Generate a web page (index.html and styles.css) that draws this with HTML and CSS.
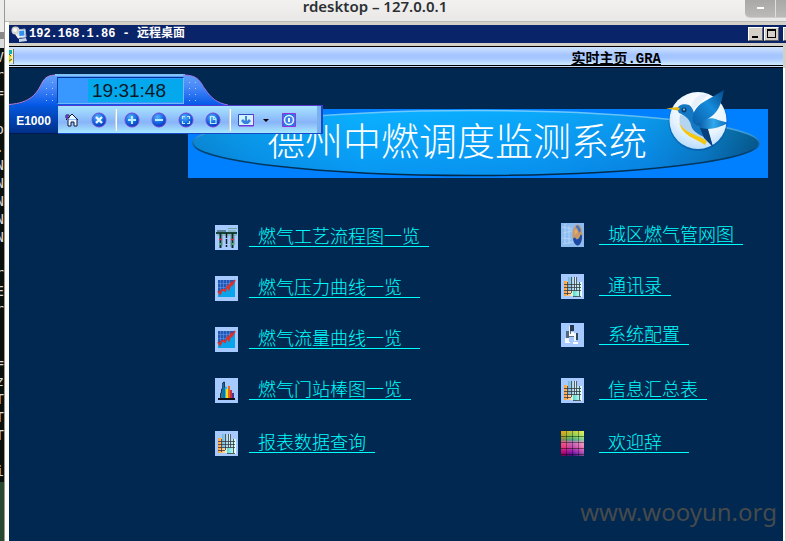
FILE: index.html
```
<!DOCTYPE html>
<html lang="zh-CN">
<head>
<meta charset="utf-8">
<title>rdesktop – 127.0.0.1</title>
<link rel="stylesheet" href="styles.css">
</head>
<body>
<svg class="defs" aria-hidden="true">
  <defs>
    <radialGradient id="ball" cx=".4" cy=".3" r=".75"><stop offset="0" stop-color="#5cb4ff"/><stop offset=".55" stop-color="#1468e0"/><stop offset="1" stop-color="#0830b0"/></radialGradient>
    <linearGradient id="orange"><stop offset="0" stop-color="#ffa030"/><stop offset="1" stop-color="#f8ecd8"/></linearGradient>
    <linearGradient id="mint"><stop offset="0" stop-color="#48e0d0"/><stop offset="1" stop-color="#f4ffff"/></linearGradient>
    <linearGradient id="sky"><stop offset="0" stop-color="#68b8e0"/><stop offset="1" stop-color="#f0f8ff"/></linearGradient>
    <symbol id="sheet" viewBox="0 0 23 25">
      <rect width="23" height="25" fill="#a6caff"/>
      <path d="M3 7h9v15H3z" fill="url(#orange)"/><path d="M12 8h9v15h-9z" fill="url(#mint)"/><path d="M7 3h9v14H7z" fill="url(#sky)"/>
      <path d="M3 10.500h17M3 13.500h17M3 16.500h17M3 19.500h7M12 22.500h8M10.500 3v16M13.500 3v14M15.500 3v14M6.500 8v13M18.500 8v14" stroke="#383840" stroke-width=".8" fill="none"/>
    </symbol>
    <symbol id="trend" viewBox="0 0 23 25">
      <rect width="23" height="25" fill="#a6caff"/><rect x="3" y="4" width="17" height="17" fill="#2058b8"/>
      <path d="M5.500 4v10M8.500 4v10M11.500 4v8M14.500 4v7M3 7.500h12M3 11.500h9" stroke="#6f9ce0" stroke-width=".5"/>
      <path d="M3 17l4-2 4-3 4-1 5-6v16H3z" fill="#08a4ec"/>
      <path d="M3 15l2 3 2-4 2 0 1 1 3-5 1 3 2-6 1 2 3-5" fill="none" stroke="#e03028" stroke-width="1.800"/>
    </symbol>
  </defs>
</svg>

<div class="screen">
  <aside class="terminal">
<pre class="terminal-text">V
r
=

o
.
N
N
N
N
N

r
E
r


=
z
T
T
T

i</pre>
  </aside>

  <div class="rdesktop">
    <header class="host-bar">
      <h1 class="host-title">rdesktop – 127.0.0.1</h1>
      <div class="host-controls">
        <button class="host-btn" aria-label="Minimize"><span class="dash"></span></button>
        <button class="host-btn host-btn-cut" aria-label="Maximize"></button>
      </div>
    </header>

    <div class="session">
      <div class="title-bar">
        <svg class="pc-icon" viewBox="0 0 17 17" aria-hidden="true">
          <path d="M6 4l8-1 1 8-8 1z" fill="#e4edf8" stroke="#a8b8cc"/><path d="M8 5l5-.500.500 5-5 .500z" fill="#2c90ec"/>
          <path d="M8 13l7-1 1 3-8 1z" fill="#c8d8ec"/><circle cx="4.500" cy="4.500" r="4" fill="#d4d4d0"/><circle cx="4" cy="4" r="2" fill="#f8f8f4"/><path d="M5 8l3 4" stroke="#f4f4f0" stroke-width="2"/>
        </svg>
        <h2 class="title-text">192.168.1.86 - 远程桌面</h2>
        <div class="win-controls">
          <button class="win-btn" aria-label="最小化"><span class="min-mark"></span></button>
          <button class="win-btn" aria-label="最大化"><span class="max-mark"></span></button>
          <button class="win-btn win-btn-cut" aria-label="关闭"></button>
        </div>
      </div>

      <div class="page-bar">
        <svg class="page-icon" viewBox="0 0 5 15" aria-hidden="true"><path d="M0 0h4v14H0z" fill="#f4ecc8"/><path d="M0 1h3v4H0z" fill="#08b0b8"/><path d="M0 5l3 2-2 2 2 2-3 3z" fill="#f0d000"/><path d="M0 5l2 2M0 12l3-2" stroke="#207830"/><path d="M4.500 0v15" stroke="#787868"/></svg>
        <span class="page-name">实时主页.GRA</span>
      </div>

      <main class="canvas">
        <section class="banner">
          <svg class="banner-oval" viewBox="0 0 580 70" preserveAspectRatio="none" aria-hidden="true">
            <defs>
              <linearGradient id="oval"><stop offset="0" stop-color="#087cc0"/><stop offset=".1" stop-color="#0894e4"/><stop offset=".3" stop-color="#08acff"/><stop offset=".6" stop-color="#08a0f8"/><stop offset=".8" stop-color="#0888e0"/><stop offset=".9" stop-color="#0868a8"/><stop offset="1" stop-color="#022c48"/></linearGradient>
              <linearGradient id="shade" x1="0" y1="0" x2="0" y2="1"><stop offset="0" stop-color="#10b8ff" stop-opacity=".4"/><stop offset="1" stop-color="#0878e0" stop-opacity=".4"/></linearGradient>
              <linearGradient id="rim" x1="0" y1="0" x2="0" y2="1"><stop offset="0" stop-color="#70ccff"/><stop offset=".4" stop-color="#3090d0"/><stop offset=".6" stop-color="#044878"/><stop offset="1" stop-color="#002848"/></linearGradient>
            </defs>
            <ellipse cx="288" cy="34.500" rx="283" ry="33" fill="url(#oval)"/>
            <ellipse cx="288" cy="34.500" rx="283" ry="33" fill="url(#shade)" stroke="url(#rim)" stroke-width="1.500"/>
          </svg>
          <h3 class="banner-title">德州中燃调度监测系统</h3>
          <svg class="bird" viewBox="0 0 68 66" aria-hidden="true">
            <defs>
              <radialGradient id="disc" cx=".55" cy=".25" r=".85"><stop offset="0" stop-color="#fff"/><stop offset=".6" stop-color="#e8f4ff"/><stop offset="1" stop-color="#a8d4fc"/></radialGradient>
              <linearGradient id="wing" x1="1" y1="0" x2="0" y2="1"><stop offset="0" stop-color="#064888"/><stop offset=".45" stop-color="#168cdc"/><stop offset="1" stop-color="#085ca8"/></linearGradient>
              <linearGradient id="tail"><stop offset="0" stop-color="#0858a4"/><stop offset=".5" stop-color="#30a8ec"/><stop offset="1" stop-color="#0868b8"/></linearGradient>
            </defs>
            <circle cx="34" cy="33.500" r="29.500" fill="#04509c" opacity=".45"/>
            <circle cx="34" cy="32.500" r="28.500" fill="url(#disc)"/>
            <path d="M27 18C30 9 37 5 45 6L29 22z" fill="#d8e8f8" opacity=".6"/>
            <path d="M16 27C14 36 18 42 24 46L43 55 33 38 24 28z" fill="#b4d4f0"/>
            <path d="M13 21C14 17 20 15 25 17 30 20 29 26 33 29L42 36 49 59 42 50C34 46 28 43 27 37 26 31 20 27 15 25z" fill="#1478c4"/>
            <path d="M15 34C19 45 35 47 43 53L41 57C34 51 18 49 15 34z" fill="#f4c810"/>
            <path d="M29 34C27 23 35 16 43 12L60 2C58 12 56 22 48 28L33 38z" fill="url(#wing)"/>
            <path d="M34 36C41 30 48 29 54 32L65 35C58 38 50 41 44 41L39 46z" fill="url(#tail)"/>
            <path d="M36 40L44 41 49 59 40 50z" fill="#06407c"/>
            <path d="M2 20.500L14 19 16 21 14 22.500z" fill="#e8b410"/><circle cx="20" cy="22" r="2.500" fill="#0c4070"/><circle cx="20" cy="21.500" r="1" fill="#90d0f8"/>
          </svg>
        </section>

        <nav class="menu">
          <ul class="menu-col">
            <li class="item gap-26">
              <svg class="icon" viewBox="0 0 23 25" aria-hidden="true"><rect width="23" height="25" fill="#a6caff"/><path d="M1 8h21" stroke="#184438" stroke-width="2"/><path d="M2 6h9" stroke="#184438"/><path d="M13 3.500h9M2 10h20M13 6h8" stroke="#70a898"/><path d="M5.500 8v15M17.500 8v15" stroke="#0c3028" stroke-width="2"/><path d="M11.500 8v14" stroke="#101c20" stroke-width="1.500" stroke-dasharray="5 1"/><path d="M7.500 10v11M15.500 10v12M19.500 10v10" stroke="#78a8a0" stroke-width=".8"/><path d="M4 14.500h3M16 14.500h3" stroke="#e03040" stroke-width="1.500"/><path d="M4 19h2M17 19h2" stroke="#48b060" stroke-width="2"/></svg>
              <a class="link" href="#process">燃气工艺流程图一览</a>
            </li>
            <li class="item gap-26">
              <svg class="icon" aria-hidden="true"><use href="#trend"/></svg>
              <a class="link trail-18" href="#pressure">燃气压力曲线一览</a>
            </li>
            <li class="item gap-26">
              <svg class="icon" aria-hidden="true"><use href="#trend"/></svg>
              <a class="link trail-18" href="#flow">燃气流量曲线一览</a>
            </li>
            <li class="item gap-28">
              <svg class="icon" viewBox="0 0 23 25" aria-hidden="true"><rect width="23" height="25" fill="#a6caff"/><path d="M3 20h17v2H3z" fill="#101018"/><path d="M5 16h2v4H5z" fill="#704828"/><path d="M6 11h2v9H6z" fill="#207888"/><path d="M8 4h2v16H8z" fill="#0870b8"/><path d="M10 9h2v11h-2z" fill="#38b8d8"/><path d="M11 11h2v9h-2z" fill="#f8e010"/><path d="M13 8h2v12h-2z" fill="#e86818"/><path d="M15 12h2v8h-2z" fill="#c03848"/><path d="M17 15h2v5h-2z" fill="#583088"/><path d="M5.500 20v-5h1v-4h1V5h1V4h1v5h1" stroke="#202840" fill="none" stroke-width=".8"/></svg>
              <a class="link" href="#stations">燃气门站棒图一览</a>
            </li>
            <li class="item">
              <svg class="icon" aria-hidden="true"><use href="#sheet"/></svg>
              <a class="link" href="#reports">报表数据查询</a>
            </li>
          </ul>
          <ul class="menu-col menu-col-right">
            <li class="item gap-26">
              <svg class="icon" viewBox="0 0 23 25" aria-hidden="true"><rect width="23" height="24" fill="#8cbcf0"/><path d="M1 4l10 2M2 10l9-2M1 15l9 1M2 21l10-2M4 1v20M8 3v18" stroke="#b4d4f8"/><ellipse cx="16.500" cy="12" rx="5" ry="10.500" fill="#c89868"/><path d="M12 16c3-4 2 2 5 0s2-7 4-3c0 6-2 9-4 9.500s-4-2-5-6.500z" fill="#1848a8"/><path d="M15 3c2-2 4 1 5 5l-2 2c0-3-3-2-3-7z" fill="#4878c0"/><path d="M13 8l3-3 1 4-3 3z" fill="#e8a860"/></svg>
              <a class="link" href="#network">城区燃气管网图</a>
            </li>
            <li class="item gap-24">
              <svg class="icon" aria-hidden="true"><use href="#sheet"/></svg>
              <a class="link" href="#contacts">通讯录</a>
            </li>
            <li class="item gap-30">
              <svg class="icon" viewBox="0 0 23 25" aria-hidden="true"><rect width="23" height="24" fill="#a6caff"/><path d="M9 2h4v6H9z" fill="#283848"/><path d="M8 3h1v6h4v1H8z" fill="#e8f0f8"/><path d="M5 8h3v7H5z" fill="#506880"/><path d="M8 10h6v4H8z" fill="#fff"/><path d="M15 10h2v7h-2z" fill="#30485c"/><path d="M13 10h2v8h-2zM4 15h4v4H4z" fill="#f0f6fc"/><path d="M12 19h5v2h-5zM4 19h5v1H4z" fill="#fff"/><path d="M9.500 8v3M8 13.500h5" stroke="#405060" stroke-width=".8"/></svg>
              <a class="link" href="#settings">系统配置</a>
            </li>
            <li class="item gap-28">
              <svg class="icon" aria-hidden="true"><use href="#sheet"/></svg>
              <a class="link" href="#summary">信息汇总表</a>
            </li>
            <li class="item">
              <span class="icon palette"></span>
              <a class="link trail-27" href="#welcome">欢迎辞</a>
            </li>
          </ul>
        </nav>

        <div class="dock">
          <div class="dock-top">
            <svg class="dock-shape" viewBox="0 0 219 32" aria-hidden="true">
              <defs><linearGradient id="cap" x1="0" y1="0" x2="0" y2="1"><stop offset="0" stop-color="#60a0f8"/><stop offset=".4" stop-color="#4888f8"/><stop offset="1" stop-color="#0458e8"/></linearGradient></defs>
              <path d="M0 32C22 31 28 20 33 10 36 4 40 2 48 2H174C190 2 191 9 196 16 202 25 208 30 219 32z" fill="url(#cap)"/>
              <path d="M0 31.500C22 30 28 20 33 10 36 4 40 2 48 2" fill="none" stroke="#c080e8"/>
              <path d="M46 2H176" stroke="#80c4f8" stroke-width="2"/>
              <path d="M174 2C190 2 191 9 196 16 202 25 208 30 219 32" fill="none" stroke="#a070f0"/>
              <path d="M43.500 9v22M37.500 15v16M180.500 9v22M186.500 9v22" stroke="#a8ccff" stroke-dasharray="1 5"/>
            </svg>
            <div class="clock"><time class="clock-face">19:31:48</time></div>
          </div>
          <div class="dock-row">
            <div class="model">E1000</div>
            <div class="tools">
              <button class="tool" aria-label="主页"><svg viewBox="0 0 16 16"><path d="M2 8l6-6 6 6M4 7v7h3v-4h3v4h3V7M2 3h3v3H2z" fill="#e8f4ff" stroke="#101838"/><path d="M2 3h2v4H2z" fill="#6038c0"/></svg></button>
              <button class="tool" aria-label="关闭页面"><svg viewBox="0 0 16 16"><circle cx="8" cy="8" r="7" fill="url(#ball)" stroke="#7050d8"/><path d="M5 5l6 6M11 5l-6 6" stroke="#e8f8ff" stroke-width="2.400"/></svg></button>
              <span class="sep"></span>
              <button class="tool" aria-label="放大"><svg viewBox="0 0 16 16"><circle cx="8" cy="8" r="7" fill="url(#ball)" stroke="#7048d8"/><path d="M4 8h8M8 4v8" stroke="#b8ecff" stroke-width="2"/></svg></button>
              <button class="tool" aria-label="缩小"><svg viewBox="0 0 16 16"><circle cx="8" cy="8" r="7" fill="url(#ball)" stroke="#7048d8"/><path d="M4 8h8" stroke="#b8ecff" stroke-width="2"/></svg></button>
              <button class="tool" aria-label="全屏"><svg viewBox="0 0 16 16"><circle cx="8" cy="8" r="7" fill="url(#ball)" stroke="#7048d8"/><path d="M4.500 7V4.500H7M9 4.500h2.500V7M11.500 9v2.500H9M7 11.500H4.500V9" fill="none" stroke="#b8ecff" stroke-width="1.200"/></svg></button>
              <button class="tool" aria-label="页面"><svg viewBox="0 0 16 16"><circle cx="8" cy="8" r="7" fill="url(#ball)" stroke="#7048d8"/><path d="M5.500 4.500H9l2 2.500v4.500H5.500zM8.500 4.500v3H11" fill="none" stroke="#b8ecff" stroke-width="1.200"/></svg></button>
              <span class="sep"></span>
              <button class="tool" aria-label="显示"><svg viewBox="0 0 16 16"><path d="M.500 2.500h15v11H.500z" fill="#d0f4ff" stroke="#3048c8"/><path d="M15.500 2v12H1" fill="none" stroke="#9030d8"/><path d="M8 4v5" stroke="#1860d0" stroke-width="1.500"/><path d="M3 9l2-2 2 2h2l2-2 2 2-3 3H6z" fill="#3880e0"/></svg></button>
              <button class="tool drop" aria-label="更多"><svg viewBox="0 0 8 16"><path d="M1 7h6L4 10z" fill="#000"/></svg></button>
              <button class="tool" aria-label="退出"><svg viewBox="0 0 16 16"><path d="M1.500 1.500h13v13h-13z" fill="#2878e8" stroke="#9830d8"/><circle cx="8" cy="8" r="4.500" fill="#4080e8" stroke="#d8f4ff" stroke-width="1.600"/><path d="M8 6v4" stroke="#e8f8ff" stroke-width="2"/></svg></button>
            </div>
          </div>
        </div>

        <div class="watermark">www.wooyun.org</div>
      </main>
    </div>
  </div>
</div>
</body>
</html>
```
FILE: styles.css
```
* { box-sizing: border-box; }

body {
  margin: 0;
  background: #fff;
  font-family: "Liberation Sans", "Noto Sans CJK SC", sans-serif;
  overflow: hidden;
}

h1, h2, h3, ul, pre { margin: 0; padding: 0; }
button { padding: 0; border: 0; background: none; }
.defs { position: absolute; width: 0; height: 0; }

.screen { display: flex; min-height: 100vh; }

/* sliver of the terminal behind the window */
.terminal {
  flex: none;
  width: 5px;
  padding-top: 48px;
  overflow: hidden;
  border-right: 1px solid #9c9894;
  background: linear-gradient(#ececea 0 32px, #888 32px 39px, #ddd 39px 48px, #0a100c 48px 482px, #284830 482px);
}
.terminal-text {
  display: flex;
  justify-content: flex-end;
  color: #d8d8d8;
  font: 14px/18px "DejaVu Sans Mono", monospace;
}

.rdesktop { flex: 1; min-width: 0; display: flex; flex-direction: column; }

.host-bar {
  display: flex;
  align-items: flex-start;
  height: 22px;
  background: linear-gradient(#f2f1f0, #e9e8e6);
  border-bottom: 1px solid #bcbab6;
}
.host-title {
  flex: 1;
  text-align: center;
  font: 600 15px/12px "Noto Sans", "Open Sans", sans-serif;
  color: #2c3034;
}
.host-controls {
  display: flex;
  border-bottom-left-radius: 5px;
  background: linear-gradient(#a8a8a6, #bcbab8);
  border-bottom: 1px solid #d0cecc;
}
.host-btn { width: 31px; height: 17px; display: grid; place-items: center; border-right: 1px solid #e0dedc; }
.host-btn-cut { width: 10px; border-right: 0; }
.dash { width: 7px; height: 2px; background: #fff; margin-bottom: 2px; }

.session {
  flex: 1;
  display: flex;
  flex-direction: column;
  border-left: 4px solid #d4d0c8;
  border-image: linear-gradient(to right, #fff 50%, #d4ccc8 50%) 0 0 0 4;
  background: #d4d0c8;
  padding-top: 3px;
}

.title-bar {
  display: flex;
  align-items: center;
  height: 18px;
  padding-left: 2px;
  background: #0a246a;
  color: #fff;
}
.pc-icon { width: 17px; height: 17px; }
.title-text {
  flex: 1;
  padding-left: 1px;
  font: bold 12px/18px "Liberation Mono", "Noto Sans CJK SC", monospace;
}
.win-controls { display: flex; gap: 1px; }
.win-btn {
  width: 15px;
  height: 14px;
  background: #d4d0c8;
  border: 1px solid;
  border-color: #fff #606060 #606060 #fff;
  display: flex;
  align-items: flex-end;
  padding: 2px;
}
.win-btn-cut { width: 3px; margin-left: 3px; padding: 0; border-right: 0; }
.min-mark { width: 6px; height: 2px; margin-left: 1px; background: #000; }
.max-mark { width: 9px; height: 9px; border: 1px solid #000; border-top-width: 2px; }

.page-bar {
  display: flex;
  align-items: center;
  height: 22px;
  margin: 3px 3px 0 0;
  border-top: 1px solid #000;
  border-bottom: 3px double #000;
  background: linear-gradient(#d0e4ff, #a4c4ff 45%, #a8c8ff 65%, #d0ecff);
}
.page-icon { width: 5px; height: 15px; }
.page-name {
  margin-left: auto;
  padding: 6px 122px 0 0;
  font: bold 14px/18px "Liberation Mono", "Noto Sans CJK SC", monospace;
  text-decoration: underline;
}

.canvas {
  flex: 1;
  position: relative;
  display: flex;
  flex-direction: column;
  margin-right: 3px;
  padding-top: 41px;
  background: #002850;
  box-shadow: 2px 0 #fff;
}

.banner {
  position: relative;
  display: flex;
  align-items: flex-start;
  height: 69px;
  margin: 0 15px 0 179px;
  background: #0080ff;
}
.banner-oval { position: absolute; inset: 0; width: 100%; height: 100%; }
.banner-title {
  position: relative;
  padding-left: 79px;
  font: 300 38px/60px "Noto Sans CJK SC", sans-serif;
  color: #fff;
  white-space: nowrap;
}
.bird { position: absolute; right: 36px; top: -21px; width: 68px; height: 66px; }

.menu {
  display: flex;
  justify-content: space-between;
  padding: 47px 40px 0 206px;
}
.menu-col { list-style: none; }
.menu-col-right { margin-top: -2px; }
.item { display: flex; align-items: flex-start; height: 25px; }
.icon { flex: none; width: 23px; height: 25px; margin-right: 11px; }
.menu-col-right .icon { margin-right: 15px; }
.link {
  padding: 0 9px;
  border-bottom: 1px solid #0ff;
  color: #0ff;
  font: 300 18px/21px "Noto Sans CJK SC", sans-serif;
  text-decoration: none;
  white-space: nowrap;
}
.trail-18 { padding-right: 18px; }
.trail-27 { padding-right: 27px; }
.gap-24 { margin-bottom: 24px; }
.gap-26 { margin-bottom: 26px; }
.gap-28 { margin-bottom: 28px; }
.gap-30 { margin-bottom: 30px; }

/* colour chart: hue bands, each cell shading to dark */
.palette {
  background:
    repeating-linear-gradient(transparent 0 5px, rgba(0,0,0,.45) 5px 6px),
    repeating-linear-gradient(to right, transparent 0 5px, rgba(0,0,0,.35) 5px 6px),
    linear-gradient(to right, rgba(255,0,0,.3), rgba(0,80,255,.2) 50%, rgba(255,255,255,.3)),
    linear-gradient(#f0e810, #90e830 22%, #50b870 36%, #f080b0 44%, #f04898 65%, #b010a0 82%, #400068);
}

/* floating toolbar with clock */
.dock { position: absolute; left: 0; top: 5px; width: 314px; }
.dock-top { position: relative; height: 32px; padding: 4px 0 0 48px; }
.dock-shape { position: absolute; left: 0; top: 0; width: 219px; height: 32px; }
.clock {
  position: relative;
  display: flex;
  width: 127px;
  height: 27px;
  padding: 1px 0 1px 30px;
  background: #3898ff;
  border: 1px solid #70b8f8;
  border-top-color: #003898;
  border-left-color: #0040a0;
}
.clock-face {
  flex: 1;
  padding-left: 4px;
  background: #04a8ec;
  color: #081828;
  font: 19px/23px "Liberation Sans", sans-serif;
}
.dock-row { display: flex; height: 29px; }
.model {
  width: 49px;
  background: linear-gradient(#0458e0, #003088);
  border-bottom: 1px solid #001850;
  color: #fff;
  font: bold 12px/32px "Liberation Sans", sans-serif;
  text-align: center;
}
.tools {
  flex: 1;
  display: flex;
  align-items: center;
  padding-left: 6px;
  background: linear-gradient(#a8e4ff, #90c0fc 45%, #88b4f8 60%, #a8e8ff);
  border: 1px solid #1848c8;
  border-right-width: 2px;
  border-top-color: #5838d0;
  border-left: 0;
  box-shadow: inset -4px 0 #78b0f0;
}
.tool { width: 16px; height: 16px; margin-right: 11px; }
.tool svg { display: block; width: 100%; height: 100%; }
.tool:has(+ .sep) { margin-right: 8px; }
.sep { width: 2px; height: 22px; margin-right: 7px; background: #d8d4d0; border-right: 1px solid #fff; }
.tool:has(+ .drop) { margin-right: 8px; }
.drop { width: 8px; }

.watermark {
  margin: auto 6px 12px auto;
  font: 24px/34px "Noto Sans", sans-serif;
  color: #464a4c;
}
```
